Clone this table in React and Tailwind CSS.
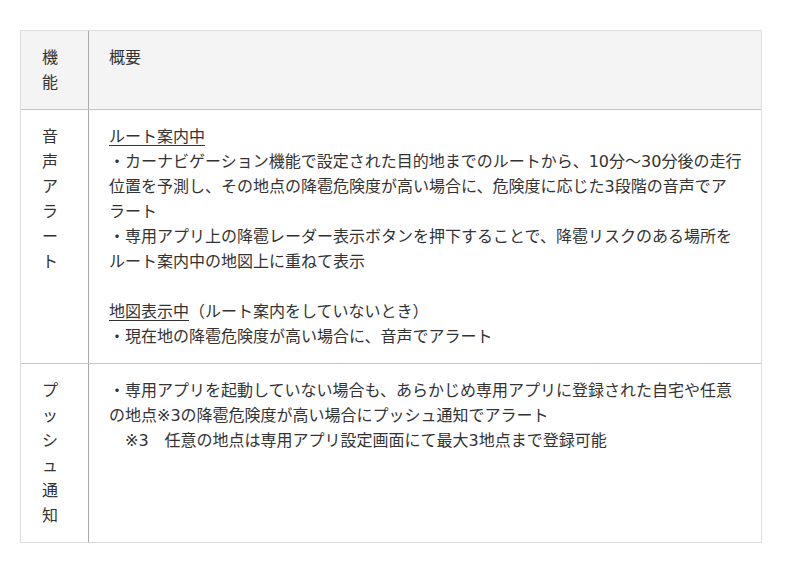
import React from "react";

const rows = [
    {
        label: ["音", "声", "ア", "ラ", "ー", "ト"],
        body: (
            <>
                <div><span className="underline underline-offset-[3px]">ルート案内中</span></div>
                <div>・カーナビゲーション機能で設定された目的地までのルートから、10分～30分後の走行</div>
                <div>位置を予測し、その地点の降雹危険度が高い場合に、危険度に応じた3段階の音声でア</div>
                <div>ラート</div>
                <div>・専用アプリ上の降雹レーダー表示ボタンを押下することで、降雹リスクのある場所を</div>
                <div>ルート案内中の地図上に重ねて表示</div>
                <div>&nbsp;</div>
                <div><span className="underline underline-offset-[3px]">地図表示中</span>（ルート案内をしていないとき）</div>
                <div>・現在地の降雹危険度が高い場合に、音声でアラート</div>
            </>
        ),
    },
    {
        label: ["プ", "ッ", "シ", "ュ", "通", "知"],
        body: (
            <>
                <div>・専用アプリを起動していない場合も、あらかじめ専用アプリに登録された自宅や任意</div>
                <div>の地点※3の降雹危険度が高い場合にプッシュ通知でアラート</div>
                <div>　※3　任意の地点は専用アプリ設定画面にて最大3地点まで登録可能</div>
            </>
        ),
    },
];

const App = () => {
    return (
        <div
            className="min-h-screen bg-white pt-[30px] pl-[20px] text-[16px] leading-[25px] text-[#333]"
            style={{ fontFamily: '"DejaVu Sans", "Noto Sans CJK JP", sans-serif' }}
        >
            <div className="w-[742px] border border-[#dddddd]">
                {/* Header */}
                <div className="flex bg-[#f4f4f4] border-b border-[#c4c4c4]">
                    <div className="w-[68px] shrink-0 border-r border-[#aaaaaa] pl-[21px] py-[14px]">
                        <div>機</div>
                        <div>能</div>
                    </div>
                    <div className="flex-1 px-[20px] py-[14px]">概要</div>
                </div>

                {/* Rows */}
                {rows.map((row, i) => (
                    <div
                        key={i}
                        className={`flex ${i < rows.length - 1 ? "border-b border-[#c4c4c4]" : ""}`}
                    >
                        <div className="w-[68px] shrink-0 border-r border-[#aaaaaa] pl-[21px] py-[14px]">
                            {row.label.map((c, j) => (
                                <div key={j}>{c}</div>
                            ))}
                        </div>
                        <div className="flex-1 px-[20px] py-[14px] whitespace-nowrap">{row.body}</div>
                    </div>
                ))}
            </div>
        </div>
    );
};

export default App;
